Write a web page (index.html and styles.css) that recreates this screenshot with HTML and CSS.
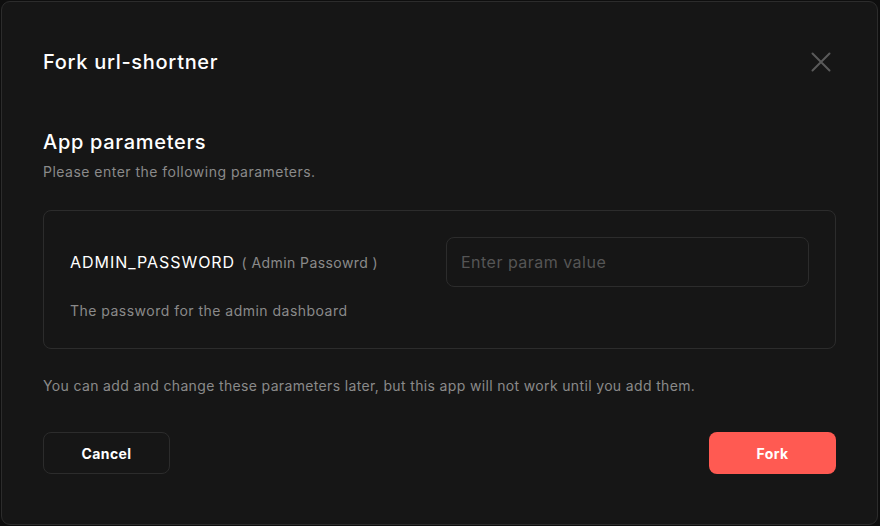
FILE: index.html
```html
<!DOCTYPE html>
<html>
<head>
<meta charset="utf-8">
<link rel="stylesheet" href="styles.css">
</head>
<body>
<div class="modal">
  <div class="header">
    <h1 class="title">Fork url-shortner</h1>
    <button class="close" aria-label="Close">
      <svg width="20" height="20" viewBox="0 0 20 20"><path d="M1.5 1.5 L18.5 18.5 M18.5 1.5 L1.5 18.5" stroke="#5a5a5a" stroke-width="2" fill="none" stroke-linecap="round"/></svg>
    </button>
  </div>
  <h2 class="section-title">App parameters</h2>
  <p class="section-desc">Please enter the following parameters.</p>
  <div class="param-box">
    <div class="param-info">
      <div class="param-name">ADMIN_PASSWORD <span class="param-label">( Admin Passowrd )</span></div>
      <div class="param-desc">The password for the admin dashboard</div>
    </div>
    <div class="param-input">
      <input type="text" placeholder="Enter param value">
    </div>
  </div>
  <p class="note">You can add and change these parameters later, but this app will not work until you add them.</p>
  <div class="actions">
    <button class="btn btn-cancel">Cancel</button>
    <button class="btn btn-fork">Fork</button>
  </div>
</div>
</body>
</html>
```
FILE: styles.css
```css
* { box-sizing: border-box; }
html, body {
  margin: 0;
  padding: 0;
  background: #0e0e0e;
  width: 880px;
  height: 526px;
  overflow: hidden;
}
body {
  font-family: Inter, "Noto Sans", sans-serif;
  color: #fff;
  padding: 1px 2px 1px 1px;
  letter-spacing: 0.03em;
}
.modal {
  width: 877px;
  height: 524px;
  background: #161616;
  border: 1px solid #2c2c2c;
  border-radius: 9px;
  padding: 0 41px 0 41px;
}
.header {
  display: flex;
  justify-content: space-between;
  align-items: center;
  padding-top: 45px;
  height: 75px;
}
.title {
  margin: 0;
  font-size: 20px;
  font-weight: 500;
  line-height: 28px;
  letter-spacing: 0.035em;
}
.close {
  background: none;
  border: none;
  padding: 0;
  margin-right: 5px;
  width: 20px;
  height: 20px;
  display: flex;
}
.section-title {
  margin: 51px 0 0;
  font-size: 20px;
  font-weight: 500;
  line-height: 28px;
  letter-spacing: 0.035em;
}
.section-desc {
  margin: 6px 0 0;
  font-size: 14px;
  line-height: 20px;
  color: #8a8a8a;
}
.param-box {
  margin-top: 28px;
  border: 1px solid #2c2c2c;
  border-radius: 8px;
  height: 139px;
  display: flex;
  justify-content: space-between;
  padding: 26px 26px 0 26px;
}
.param-info {
  padding-top: 14px;
}
.param-name {
  font-size: 16px;
  font-weight: 400;
  line-height: 22px;
  letter-spacing: 0.06em;
}
.param-label {
  font-size: 14px;
  color: #8a8a8a;
  font-weight: 400;
  margin-left: 1px;
  letter-spacing: 0.03em;
}
.param-desc {
  margin-top: 27px;
  font-size: 14px;
  line-height: 20px;
  color: #8a8a8a;
}
.param-input input {
  width: 363px;
  height: 50px;
  background: #161616;
  border: 1px solid #2c2c2c;
  border-radius: 8px;
  padding: 0 14px;
  font-family: inherit;
  font-size: 16px;
  letter-spacing: 0.03em;
  color: #fff;
  outline: none;
}
.param-input input::placeholder { color: #555; }
.note {
  margin: 27px 0 0;
  font-size: 14px;
  line-height: 20px;
  color: #8a8a8a;
  letter-spacing: 0.025em;
}
.actions {
  margin-top: 36px;
  display: flex;
  justify-content: space-between;
}
.btn {
  width: 127px;
  height: 42px;
  border-radius: 8px;
  font-family: inherit;
  font-size: 14px;
  font-weight: 700;
  letter-spacing: 0.03em;
  color: #fff;
  cursor: pointer;
}
.btn-cancel {
  background: #161616;
  border: 1px solid #2c2c2c;
}
.btn-fork {
  background: #ff5a52;
  border: none;
}
```
